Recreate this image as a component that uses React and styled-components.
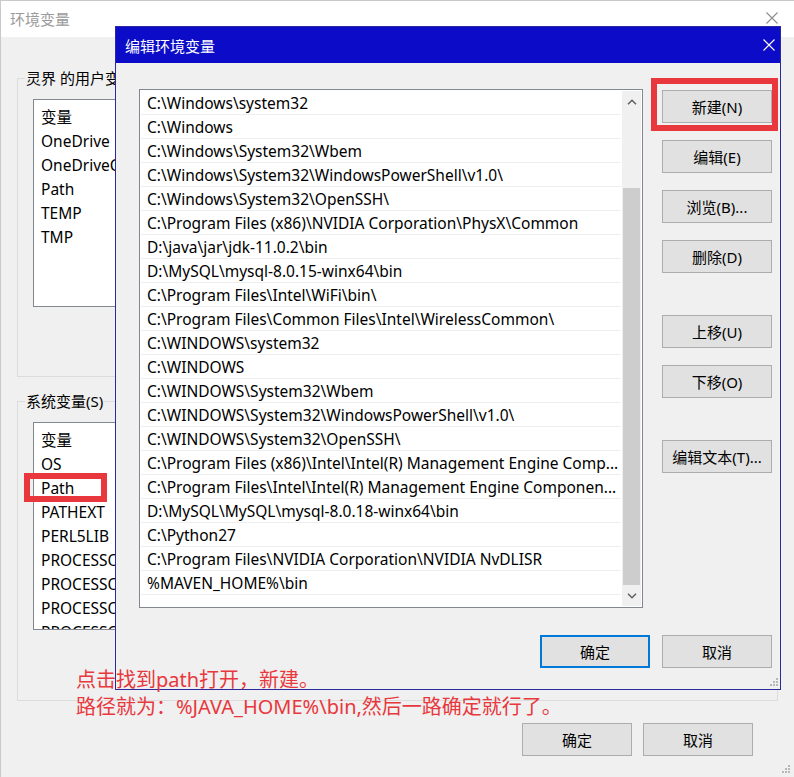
import React from 'react';
import styled, { createGlobalStyle } from 'styled-components';

const FONT = `"Noto Sans", "Noto Sans CJK SC", sans-serif`;

const GlobalStyle = createGlobalStyle`
  html, body { margin: 0; padding: 0; }
  body { width: 794px; height: 777px; overflow: hidden; background: #f0f0f0; }
  * { box-sizing: border-box; }
`;

const Desktop = styled.div`
  position: relative;
  width: 794px;
  height: 777px;
  overflow: hidden;
  font-family: ${FONT};
  color: #000;
`;

/* ---------- background window ---------- */
const Window = styled.div`
  position: relative;
  display: flex;
  flex-direction: column;
  width: 794px;
  height: 777px;
  border-left: 1px solid #c9c9c9;
  border-top: 1px solid #c9c9c9;
  background: #f0f0f0;
`;

const BgTitleBar = styled.div`
  flex: none;
  display: flex;
  align-items: center;
  justify-content: space-between;
  height: 36px;
  padding: 0 16px 2px 9px;
  background: #fff;
  color: #9b9b9b;
  font-size: 15px;
`;

const BgBody = styled.div`
  flex: 1;
  display: flex;
  flex-direction: column;
  padding: 0 16px;
`;

const GroupBox = styled.div`
  flex: none;
  height: ${p => p.$h}px;
  margin-top: ${p => p.$mt}px;
  border: 1px solid #dcdcdc;
`;

const GroupTitle = styled.div`
  width: fit-content;
  margin: -11px 0 0 7px;
  padding: 0 1px;
  line-height: 20px;
  font-size: 15px;
  background: #f0f0f0;
`;

const VarList = styled.div`
  width: 560px;
  height: 208px;
  margin: 11px 0 0 15px;
  padding: 5px 0 0 7px;
  border: 1px solid #828790;
  background: #fff;
  overflow: hidden;
`;

const VarRow = styled.div`
  height: 24px;
  line-height: 24px;
  font-size: 15.5px;
  white-space: nowrap;
`;

const BgFooter = styled.div`
  display: flex;
  justify-content: flex-end;
  gap: 11px;
  margin-top: 22px;
  padding-right: 25px;
`;

const Button = styled.div`
  flex: none;
  display: flex;
  align-items: center;
  justify-content: center;
  width: 110px;
  height: 33px;
  margin-top: ${p => p.$gap || 0}px;
  border: ${p => (p.$primary ? '2px solid #0078d7' : '1px solid #adadad')};
  background: #e1e1e1;
  font-size: 15px;
  white-space: nowrap;
`;

const WindowGrip = styled.div`
  position: absolute;
  right: 3px;
  bottom: 3px;
  line-height: 0;
`;

/* ---------- dialog ---------- */
const Dialog = styled.div`
  position: absolute;
  left: 115px;
  top: 26px;
  width: 666px;
  height: 664px;
  display: flex;
  flex-direction: column;
  border: 1px solid #2a2a9c;
  background: #f0f0f0;
`;

const DlgTitleBar = styled.div`
  flex: none;
  display: flex;
  align-items: center;
  justify-content: space-between;
  height: 36px;
  padding: 0 5px 0 9px;
  background: #0b0bc8;
  color: #fff;
  font-size: 15px;
`;

const DlgBody = styled.div`
  flex: 1;
  display: flex;
  flex-direction: column;
  padding: 26px 8px 0 23px;
`;

const MainRow = styled.div`
  display: flex;
  gap: 19px;
`;

const PathList = styled.div`
  flex: none;
  display: flex;
  width: 504px;
  height: 519px;
  padding: 1px;
  border: 1px solid #828790;
  background: #fff;
`;

const Rows = styled.div`
  flex: 1;
  min-width: 0;
  overflow: hidden;
  padding-right: 1px;
`;

const PathRow = styled.div`
  height: 24px;
  line-height: 24px;
  padding-left: 6px;
  box-shadow: inset 0 -1px 0 #eeeeee;
  font-size: 15.5px;
  white-space: nowrap;
  overflow: hidden;
`;

const ScrollBar = styled.div`
  flex: none;
  display: flex;
  flex-direction: column;
  width: 19px;
  background: #f0f0f0;
`;

const ScrollArrow = styled.div`
  flex: none;
  display: flex;
  align-items: center;
  justify-content: center;
  height: 21px;
  line-height: 0;
`;

const Track = styled.div`
  flex: 1;
  display: flex;
  flex-direction: column;
  justify-content: flex-end;
  padding: 0 1px;
`;

const Thumb = styled.div`
  height: 397px;
  background: #cdcdcd;
`;

const ButtonCol = styled.div`
  flex: none;
  display: flex;
  flex-direction: column;
  width: 110px;
  padding-top: 1px;
`;

const DlgFooter = styled.div`
  display: flex;
  justify-content: flex-end;
  gap: 12px;
  margin-top: 27px;
`;

const DlgGrip = styled.div`
  align-self: flex-end;
  margin: auto -7px 2px 0;
  line-height: 0;
`;

/* ---------- annotations ---------- */
const RedBox = styled.div`
  position: absolute;
  left: ${p => p.$x}px;
  top: ${p => p.$y}px;
  width: ${p => p.$w}px;
  height: ${p => p.$h}px;
  border: 6px solid #e8383d;
`;

const Note = styled.div`
  position: absolute;
  left: 76px;
  top: 666px;
  color: #e8383d;
  font-size: 20px;
  line-height: 27px;
  white-space: nowrap;
`;

/* ---------- icons ---------- */
const CloseIcon = ({ color }) => (
  <svg width="12" height="12" viewBox="0 0 12 12">
    <path d="M0.5 0.5 L11.5 11.5 M11.5 0.5 L0.5 11.5" stroke={color} strokeWidth="1.1" fill="none" />
  </svg>
);

const Chevron = ({ up }) => (
  <svg width="10" height="6" viewBox="0 0 10 6">
    <polyline
      points={up ? '1,5.2 5,1.2 9,5.2' : '1,0.8 5,4.8 9,0.8'}
      stroke="#606060"
      strokeWidth="1.5"
      fill="none"
    />
  </svg>
);

const Grip = () => (
  <svg width="10" height="10" viewBox="0 0 10 10">
    {[[7, 1], [4, 4], [7, 4], [1, 7], [4, 7], [7, 7]].map(([x, y]) => (
      <rect key={`${x}-${y}`} x={x} y={y} width="2" height="2" fill="#b8b8b8" />
    ))}
  </svg>
);

const userVars = ['变量', 'OneDrive', 'OneDriveConsumer', 'Path', 'TEMP', 'TMP'];
const sysVars = [
  '变量', 'OS', 'Path', 'PATHEXT', 'PERL5LIB', 'PROCESSOR_ARCHITECTURE',
  'PROCESSOR_IDENTIFIER', 'PROCESSOR_LEVEL', 'PROCESSOR_REVISION',
];

const paths = [
  'C:\\Windows\\system32',
  'C:\\Windows',
  'C:\\Windows\\System32\\Wbem',
  'C:\\Windows\\System32\\WindowsPowerShell\\v1.0\\',
  'C:\\Windows\\System32\\OpenSSH\\',
  'C:\\Program Files (x86)\\NVIDIA Corporation\\PhysX\\Common',
  'D:\\java\\jar\\jdk-11.0.2\\bin',
  'D:\\MySQL\\mysql-8.0.15-winx64\\bin',
  'C:\\Program Files\\Intel\\WiFi\\bin\\',
  'C:\\Program Files\\Common Files\\Intel\\WirelessCommon\\',
  'C:\\WINDOWS\\system32',
  'C:\\WINDOWS',
  'C:\\WINDOWS\\System32\\Wbem',
  'C:\\WINDOWS\\System32\\WindowsPowerShell\\v1.0\\',
  'C:\\WINDOWS\\System32\\OpenSSH\\',
  'C:\\Program Files (x86)\\Intel\\Intel(R) Management Engine Comp...',
  'C:\\Program Files\\Intel\\Intel(R) Management Engine Componen...',
  'D:\\MySQL\\MySQL\\mysql-8.0.18-winx64\\bin',
  'C:\\Python27',
  'C:\\Program Files\\NVIDIA Corporation\\NVIDIA NvDLISR',
  '%MAVEN_HOME%\\bin',
];

const sideButtons = [
  { label: '新建(N)', gap: 0 },
  { label: '编辑(E)', gap: 17 },
  { label: '浏览(B)...', gap: 17 },
  { label: '删除(D)', gap: 17 },
  { label: '上移(U)', gap: 42 },
  { label: '下移(O)', gap: 17 },
  { label: '编辑文本(T)...', gap: 42 },
];

export default function App() {
  return (
    <Desktop>
      <GlobalStyle />
      <Window>
        <BgTitleBar>
          <span>环境变量</span>
          <CloseIcon color="#8c8c8c" />
        </BgTitleBar>
        <BgBody>
          <GroupBox $mt={41} $h={299}>
            <GroupTitle>灵界 的用户变量(U)</GroupTitle>
            <VarList>
              {userVars.map(v => <VarRow key={v}>{v}</VarRow>)}
            </VarList>
          </GroupBox>
          <GroupBox $mt={24} $h={300}>
            <GroupTitle>系统变量(S)</GroupTitle>
            <VarList>
              {sysVars.map(v => <VarRow key={v}>{v}</VarRow>)}
            </VarList>
          </GroupBox>
          <BgFooter>
            <Button>确定</Button>
            <Button>取消</Button>
          </BgFooter>
        </BgBody>
        <WindowGrip><Grip /></WindowGrip>
      </Window>

      <Dialog>
        <DlgTitleBar>
          <span>编辑环境变量</span>
          <CloseIcon color="#ffffff" />
        </DlgTitleBar>
        <DlgBody>
          <MainRow>
            <PathList>
              <Rows>
                {paths.map((p, i) => <PathRow key={i}>{p}</PathRow>)}
              </Rows>
              <ScrollBar>
                <ScrollArrow><Chevron up /></ScrollArrow>
                <Track><Thumb /></Track>
                <ScrollArrow><Chevron /></ScrollArrow>
              </ScrollBar>
            </PathList>
            <ButtonCol>
              {sideButtons.map(b => (
                <Button key={b.label} $gap={b.gap}>{b.label}</Button>
              ))}
            </ButtonCol>
          </MainRow>
          <DlgFooter>
            <Button $primary>确定</Button>
            <Button>取消</Button>
          </DlgFooter>
          <DlgGrip><Grip /></DlgGrip>
        </DlgBody>
      </Dialog>

      <RedBox $x={651} $y={78} $w={127} $h={53} />
      <RedBox $x={24} $y={473} $w={83} $h={29} />

      <Note>
        点击找到path打开，新建。<br />
        路径就为：%JAVA_HOME%\bin,然后一路确定就行了。
      </Note>
    </Desktop>
  );
}
